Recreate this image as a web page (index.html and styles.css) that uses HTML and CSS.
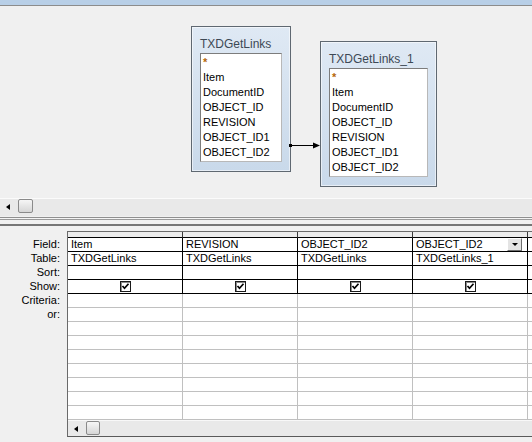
FILE: index.html
```html
<!DOCTYPE html>
<html>
<head>
<meta charset="utf-8">
<link rel="stylesheet" href="styles.css">
</head>
<body>
<div class="titlebar"></div>
<div class="canvas">
  <div class="tbl tbl1">
    <div class="tbl-title">TXDGetLinks</div>
    <ul class="fields">
      <li class="star">*</li>
      <li>Item</li>
      <li>DocumentID</li>
      <li>OBJECT_ID</li>
      <li>REVISION</li>
      <li>OBJECT_ID1</li>
      <li>OBJECT_ID2</li>
    </ul>
  </div>
  <div class="tbl tbl2">
    <div class="tbl-title">TXDGetLinks_1</div>
    <ul class="fields">
      <li class="star">*</li>
      <li>Item</li>
      <li>DocumentID</li>
      <li>OBJECT_ID</li>
      <li>REVISION</li>
      <li>OBJECT_ID1</li>
      <li>OBJECT_ID2</li>
    </ul>
  </div>
  <svg class="join" width="32" height="13" viewBox="0 0 32 13">
    <rect x="0" y="5" width="3" height="3" fill="#000"/>
    <line x1="0" y1="6.5" x2="26" y2="6.5" stroke="#000" stroke-width="1"/>
    <polygon points="24,3.5 31,6.5 24,9.5" fill="#000"/>
  </svg>
</div>
<div class="hscroll top-scroll"><span class="arrow-left"></span><span class="thumb"></span></div>
<div class="splitter"></div>
<div class="qbe">
  <div class="labels">
    <div class="lab">Field:</div>
    <div class="lab">Table:</div>
    <div class="lab">Sort:</div>
    <div class="lab">Show:</div>
    <div class="lab">Criteria:</div>
    <div class="lab">or:</div>
  </div>
  <div class="grid-wrap">
    <div class="grid">
      <div class="h"></div><div class="h"></div><div class="h"></div><div class="h"></div><div class="h"></div>

      <div class="c">Item</div><div class="c">REVISION</div><div class="c">OBJECT_ID2</div><div class="c combo"><span>OBJECT_ID2</span><span class="dd"><span class="tri"></span></span></div><div class="c"></div>

      <div class="c">TXDGetLinks</div><div class="c">TXDGetLinks</div><div class="c">TXDGetLinks</div><div class="c">TXDGetLinks_1</div><div class="c"></div>

      <div class="c"></div><div class="c"></div><div class="c"></div><div class="c"></div><div class="c"></div>

      <div class="c chk"><span class="box"><svg width="9" height="9" viewBox="0 0 9 9"><path d="M1.5 4 L3.5 6.2 L7.5 1.8" fill="none" stroke="#000" stroke-width="1.7"/></svg></span></div>
      <div class="c chk"><span class="box"><svg width="9" height="9" viewBox="0 0 9 9"><path d="M1.5 4 L3.5 6.2 L7.5 1.8" fill="none" stroke="#000" stroke-width="1.7"/></svg></span></div>
      <div class="c chk"><span class="box"><svg width="9" height="9" viewBox="0 0 9 9"><path d="M1.5 4 L3.5 6.2 L7.5 1.8" fill="none" stroke="#000" stroke-width="1.7"/></svg></span></div>
      <div class="c chk"><span class="box"><svg width="9" height="9" viewBox="0 0 9 9"><path d="M1.5 4 L3.5 6.2 L7.5 1.8" fill="none" stroke="#000" stroke-width="1.7"/></svg></span></div>
      <div class="c"></div>

      <div class="g"></div><div class="g"></div><div class="g"></div><div class="g"></div><div class="g"></div>
      <div class="g"></div><div class="g"></div><div class="g"></div><div class="g"></div><div class="g"></div>
      <div class="g"></div><div class="g"></div><div class="g"></div><div class="g"></div><div class="g"></div>
      <div class="g"></div><div class="g"></div><div class="g"></div><div class="g"></div><div class="g"></div>
      <div class="g"></div><div class="g"></div><div class="g"></div><div class="g"></div><div class="g"></div>
      <div class="g"></div><div class="g"></div><div class="g"></div><div class="g"></div><div class="g"></div>
      <div class="g"></div><div class="g"></div><div class="g"></div><div class="g"></div><div class="g"></div>
      <div class="g"></div><div class="g"></div><div class="g"></div><div class="g"></div><div class="g"></div>
      <div class="g"></div><div class="g"></div><div class="g"></div><div class="g"></div><div class="g"></div>
    </div>
    <div class="hscroll bottom-scroll"><span class="arrow-left"></span><span class="thumb"></span></div>
  </div>
</div>
</body>
</html>
```

FILE: styles.css
```css
* { box-sizing: border-box; margin: 0; padding: 0; }
html, body { width: 532px; height: 442px; overflow: hidden; }
body {
  margin: 0;
  background: #f0f0f0;
  font-family: "Liberation Sans", Arial, sans-serif;
  font-size: 11px;
  color: #000;
}
.titlebar {
  height: 6px;
  background: #b8cfe7;
  border-bottom: 1px solid #8c8c8c;
}
.canvas {
  position: relative;
  height: 192px;
}
.tbl {
  position: absolute;
  border: 1px solid #5f6871;
  background: linear-gradient(#dfe9f4, #c9d9ea);
  box-shadow: inset 0 0 0 1px rgba(255,255,255,0.55);
  padding: 9px 8px 9px;
}
.tbl1 { left: 191px; top: 20px; width: 100px; }
.tbl2 { left: 320px; top: 35px; width: 117px; }
.tbl-title {
  font-size: 12px;
  line-height: 17px;
  color: #3d4955;
  white-space: nowrap;
}
.fields {
  list-style: none;
  background: #fff;
  border: 1px solid #7c7c7c;
  border-right-color: #b8b8b8;
  border-bottom-color: #b8b8b8;
  padding: 1px 0;
}
.fields li {
  height: 15px;
  line-height: 15px;
  padding-left: 2px;
  white-space: nowrap;
  overflow: hidden;
}
.fields .star { color: #b5670a; font-weight: bold; }
.join { position: absolute; left: 289px; top: 133px; }

.hscroll {
  display: flex;
  align-items: flex-start;
  background: #e9e9e9;
}
.top-scroll {
  height: 18px;
  border-top: 1px solid #fbfbfb;
  padding-left: 6px;
}
.arrow-left {
  width: 0;
  height: 0;
  margin-top: 5px;
  border-top: 3.5px solid transparent;
  border-bottom: 3.5px solid transparent;
  border-right: 4px solid #000;
}
.thumb {
  width: 15px;
  height: 14px;
  margin-left: 8px;
  border: 1px solid #8a8a8a;
  border-radius: 2px;
  background: linear-gradient(#f6f6f6, #d6d6d6);
}
.splitter {
  height: 15px;
  background: linear-gradient(to bottom,
    #f0f0f0 0 1px, #8f8f8f 1px 2px, #f4f4f4 2px 3px, #9a9a9a 3px 4px,
    #f0f0f0 4px 8px, #767676 8px 10px, #f0f0f0 10px);
}
.qbe {
  display: flex;
}
.labels {
  width: 67px;
  flex: none;
  padding-top: 7px;
  padding-right: 7px;
}
.lab {
  height: 14px;
  line-height: 13px;
  text-align: right;
}
.grid-wrap {
  flex: 1;
  min-width: 0;
  overflow: hidden;
  border-left: 1px solid #6a6a6a;
  border-top: 1px solid #6a6a6a;
  border-bottom: 1px solid #5a5a5a;
}
.grid {
  display: grid;
  grid-template-columns: repeat(5, 115px);
  width: 575px;
}
.h {
  height: 6px;
  background: #ececec;
  border-right: 1px solid #3a3a3a;
  border-bottom: 1px solid #000;
}
.c, .g {
  height: 14px;
  line-height: 13px;
  background: #fff;
  padding-left: 3px;
  white-space: nowrap;
  overflow: hidden;
}
.c {
  border-right: 1px solid #000;
  border-bottom: 1px solid #000;
}
.g {
  border-right: 1px solid #c0c0c0;
  border-bottom: 1px solid #c0c0c0;
}
.combo {
  display: flex;
  justify-content: space-between;
  padding-right: 5px;
}
.dd {
  width: 15px;
  height: 13px;
  display: flex;
  align-items: center;
  justify-content: center;
  background: #e4e4e4;
  border: 1px solid;
  border-color: #fff #6e6e6e #6e6e6e #fff;
}
.tri {
  width: 0;
  height: 0;
  border-left: 3px solid transparent;
  border-right: 3px solid transparent;
  border-top: 3px solid #000;
}
.chk {
  display: flex;
  align-items: center;
  justify-content: center;
  padding-left: 0;
}
.box {
  width: 11px;
  height: 11px;
  border: 1px solid #1a1a1a;
  box-shadow: inset 1px 1px 0 #8a8a8a;
  background: #fff;
  display: flex;
  align-items: center;
  justify-content: center;
}
.bottom-scroll {
  height: 16px;
  border-top: 1px solid #f8f8f8;
  padding-left: 6px;
}
.bottom-scroll .arrow-left { margin-top: 5px; }
.bottom-scroll .thumb { width: 14px; height: 14px; margin-left: 8px; margin-top: 0; }
```
